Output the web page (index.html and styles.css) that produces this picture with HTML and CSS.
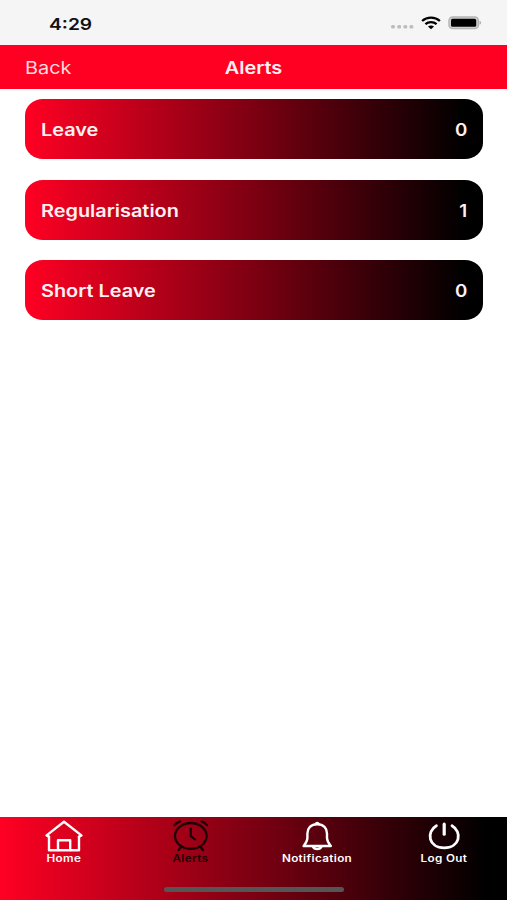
FILE: index.html
```html
<!DOCTYPE html>
<html lang="en">
<head>
  <meta charset="UTF-8" />
  <meta name="viewport" content="width=device-width, initial-scale=1.0"/>
  <title>Alerts</title>
  <link rel="stylesheet" href="styles.css">
</head>
<body>
  <div class="status-bar">
    <span class="time wide">4:29</span>
    <div class="status-icons">
      <svg class="signal" width="24" height="6" viewBox="0 0 24 6" fill="#bdbdbd">
        <rect x="1" y="1" width="4" height="3.6" rx="1.5"/>
        <rect x="7.2" y="1" width="4" height="3.6" rx="1.5"/>
        <rect x="13.3" y="1" width="4" height="3.6" rx="1.5"/>
        <rect x="19.4" y="1" width="4" height="3.6" rx="1.5"/>
      </svg>
      <svg class="wifi" width="20" height="14" viewBox="0 0 20 14" fill="none" stroke="#000" stroke-width="2.3">
        <path d="M1.1 5C6 .6 14 .6 18.9 5"/>
        <path d="M4.4 8.2C7.5 5.4 12.5 5.4 15.6 8.2"/>
        <path d="M7 10.6C8.6 9.2 11.4 9.2 13 10.6L10 13.2Z" fill="#000" stroke="none"/>
      </svg>
      <svg class="battery" width="34" height="14" viewBox="0 0 34 14">
        <rect x="1" y="1" width="29.4" height="11.6" rx="3.6" fill="#d0d0d0" stroke="#b4b4b4" stroke-width="1.4"/>
        <rect x="3" y="2.8" width="25.2" height="8" rx="1.6" fill="#000"/>
        <path d="M31.6 4.8C33.4 5.4 33.4 8.2 31.6 8.8Z" fill="#a0a0a0"/>
      </svg>
    </div>
  </div>

  <header>
    <a href="#" class="back wide">Back</a>
    <h1 class="wide">Alerts</h1>
  </header>

  <main class="alerts">
    <div class="card">
      <span class="label wide">Leave</span>
      <span class="count wide">0</span>
    </div>
    <div class="card">
      <span class="label wide">Regularisation</span>
      <span class="count wide">1</span>
    </div>
    <div class="card">
      <span class="label wide">Short Leave</span>
      <span class="count wide">0</span>
    </div>
  </main>

  <footer>
    <nav>
      <a href="#home">
        <svg width="40" height="32" viewBox="0 0 40 32" fill="none" stroke="#fff" stroke-width="2.4" stroke-linejoin="round" stroke-linecap="round">
          <path d="M6 16.6V30.2H36V16.6"/>
          <path d="M6 16.8L3.6 15.4L21 1.8L38.4 15.4L36 16.8"/>
          <path d="M15 30V20.2H27.2V30"/>
        </svg>
        <span class="wide">Home</span>
      </a>
      <a href="#alerts" class="active">
        <svg width="40" height="32" viewBox="0 0 40 32" fill="none" stroke="#210005" stroke-width="2.3" stroke-linecap="round" stroke-linejoin="round">
          <ellipse cx="20.8" cy="15.9" rx="15.8" ry="12.9"/>
          <path d="M20.8 8.4V16.2L25 19.4"/>
          <path d="M11 27L8.6 30M30.6 27L33 30"/>
          <path d="M4.6 5Q6.4 2.8 10 1.4M31.6 1.4Q35.2 2.8 37 5"/>
        </svg>
        <span class="wide">Alerts</span>
      </a>
      <a href="#notification">
        <svg width="40" height="32" viewBox="0 0 40 32" fill="none" stroke="#fff" stroke-width="2.4" stroke-linejoin="round" stroke-linecap="round">
          <path d="M20.2 4.2C13.8 4.2 10.4 8.2 10.4 13.4V18C10.4 21.4 8.8 23.2 6.6 26H33.8C31.6 23.2 30 21.4 30 18V13.4C30 8.2 26.6 4.2 20.2 4.2Z"/>
          <path d="M18.8 3.8Q20.2 2.4 21.6 3.8"/>
          <path d="M16 26.8C17.2 29.8 23.2 29.8 24.4 26.8"/>
        </svg>
        <span class="wide">Notification</span>
      </a>
      <a href="#logout">
        <svg width="40" height="32" viewBox="0 0 40 32" fill="none" stroke="#fff" stroke-width="2.8" stroke-linecap="round">
          <path d="M12.4 5.8C2 11.8 4.2 27.8 20.2 27.8C36.2 27.8 38.4 11.8 28 5.8"/>
          <path d="M20.2 4.2V14.2" stroke-width="3.2"/>
        </svg>
        <span class="wide">Log Out</span>
      </a>
    </nav>
    <div class="home-indicator"></div>
  </footer>
</body>
</html>
```
FILE: styles.css
```css
* {
  margin: 0;
  padding: 0;
  box-sizing: border-box;
  font-family: Inter, "Liberation Sans", sans-serif;
}

body {
  height: 900px;
  display: flex;
  flex-direction: column;
  background: #fff;
  overflow: hidden;
}

a {
  color: #fff;
  text-decoration: none;
}

/* wide lettering */
.wide {
  display: inline-block;
  transform: scaleX(1.17);
}

.status-bar {
  height: 44.5px;
  padding: 2px 25px 0 49px;
  display: flex;
  justify-content: space-between;
  align-items: center;
  background: #f5f5f5;
}

.time {
  padding-top: 1px;
  font-size: 16px;
  font-weight: 600;
  color: #111;
  transform-origin: left;
  transform: scaleX(1.2);
}

.status-icons {
  display: flex;
  align-items: center;
}

.signal {
  margin-top: 8px;
}

.wifi {
  margin-left: 7px;
}

.battery {
  margin-left: 7px;
}

header {
  height: 44.5px;
  padding: 2px 25px 0 25px;
  display: grid;
  grid-template-columns: 1fr auto 1fr;
  align-items: center;
  background: #ff0023;
  color: #fff;
}

.back {
  font-size: 17px;
  color: #ffd9de;
  transform-origin: left;
}

header h1 {
  font-size: 17px;
  font-weight: 600;
  color: #fff0f1;
}

.alerts {
  flex: 1;
  padding: 10.3px 24.5px 0 25.2px;
  display: flex;
  flex-direction: column;
  gap: 20.2px;
}

.card {
  height: 60.2px;
  padding: 2px 15.5px 0 15.5px;
  display: flex;
  justify-content: space-between;
  align-items: center;
  border-radius: 18px / 16px;
  background: linear-gradient(to right, #ff0023, #7c0012 50%, #000 96%);
  color: #fff0f1;
  font-size: 17px;
  font-weight: 600;
}

.label {
  transform-origin: left;
}

.count {
  transform-origin: right;
  transform: scaleX(1.1);
}

footer {
  height: 83.5px;
  display: flex;
  flex-direction: column;
  justify-content: space-between;
  align-items: center;
  padding: 3px 0 8px;
  background: linear-gradient(to right, #ff0023, #7c0012 50%, #000 96%);
}

nav {
  width: 100%;
  display: grid;
  grid-template-columns: repeat(4, 1fr);
}

nav a {
  display: flex;
  flex-direction: column;
  align-items: center;
  font-size: 10px;
  font-weight: 600;
  line-height: 12px;
  letter-spacing: 0.3px;
}

nav a.active {
  color: #210005;
}

.home-indicator {
  width: 180px;
  height: 5px;
  border-radius: 3px;
  background: #555;
}
```
